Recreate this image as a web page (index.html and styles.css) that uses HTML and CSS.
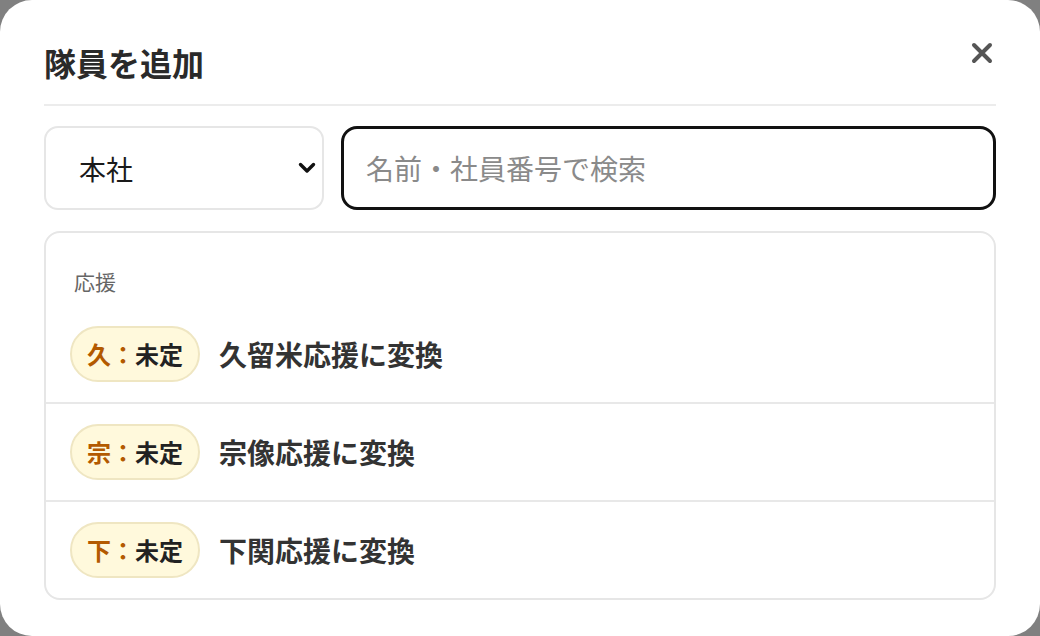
FILE: index.html
```html
<!DOCTYPE html>
<html lang="ja">
<head>
<meta charset="utf-8">
<title>隊員を追加</title>
<link rel="stylesheet" href="styles.css">
</head>
<body>
<div class="modal">
  <div class="header">
    <h1 class="title">隊員を追加</h1>
    <button class="close" aria-label="閉じる">
      <svg width="22" height="22" viewBox="0 0 22 22"><path d="M3 3 L19 19 M19 3 L3 19" stroke="#555" stroke-width="4" stroke-linecap="round"/></svg>
    </button>
  </div>
  <div class="toolbar">
    <div class="select-wrap">
      <select class="select"><option>本社</option></select>
      <svg class="chev" width="18" height="12" viewBox="0 0 18 12"><path d="M2.5 2.5 L9 9 L15.5 2.5" fill="none" stroke="#111" stroke-width="3.4" stroke-linecap="round" stroke-linejoin="round"/></svg>
    </div>
    <input class="search" type="text" placeholder="名前・社員番号で検索">
  </div>
  <div class="list">
    <div class="group-label">応援</div>
    <div class="row">
      <span class="badge"><span class="b-key">久：</span><span class="b-val">未定</span></span>
      <span class="row-text">久留米応援に変換</span>
    </div>
    <div class="row">
      <span class="badge"><span class="b-key">宗：</span><span class="b-val">未定</span></span>
      <span class="row-text">宗像応援に変換</span>
    </div>
    <div class="row">
      <span class="badge"><span class="b-key">下：</span><span class="b-val">未定</span></span>
      <span class="row-text">下関応援に変換</span>
    </div>
  </div>
</div>
</body>
</html>
```

FILE: styles.css
```css
* { box-sizing: border-box; }
html, body { margin: 0; padding: 0; }
body {
  background: #808080;
  font-family: "Noto Sans CJK JP", "Noto Sans", sans-serif;
  width: 1040px;
  height: 636px;
  overflow: hidden;
}
.modal {
  width: 1040px;
  height: 636px;
  background: #fff;
  border-radius: 32px;
  padding: 0 44px;
}
.header {
  display: flex;
  align-items: center;
  justify-content: space-between;
  padding-top: 40px;
  padding-bottom: 20px;
  border-bottom: 2px solid #ececec;
}
.title {
  margin: 0;
  font-size: 32px;
  line-height: 44px;
  font-weight: 700;
  color: #2a2a2a;
}
.close {
  border: 0;
  background: none;
  padding: 0;
  margin-right: 3px;
  margin-top: -18px;
  width: 22px;
  height: 22px;
  display: flex;
}
.toolbar {
  display: flex;
  gap: 17px;
  margin-top: 20px;
  height: 84px;
}
.select-wrap {
  position: relative;
  width: 280px;
  flex: none;
}
.select {
  appearance: none;
  -webkit-appearance: none;
  width: 100%;
  height: 84px;
  border: 2px solid #e6e6e6;
  border-radius: 14px;
  background: #fff;
  padding: 0 0 0 33px;
  font-family: inherit;
  font-size: 27px;
  color: #1a1a1a;
}
.chev {
  position: absolute;
  right: 8px;
  top: 36px;
}
.search {
  flex: 1;
  height: 84px;
  border: 3px solid #111;
  border-radius: 16px;
  padding: 0 0 0 22px;
  font-family: inherit;
  font-size: 28px;
  color: #222;
  outline: none;
}
.search::placeholder { color: #8a8a8a; }
.list {
  margin-top: 21px;
  border: 2px solid #e6e6e6;
  border-radius: 16px;
}
.group-label {
  padding: 36px 0 0 28px;
  line-height: 24px;
  height: 73px;
  font-size: 21px;
  color: #666;
}
.row {
  display: flex;
  align-items: center;
  height: 96px;
  padding-left: 24px;
  gap: 19px;
}
.row + .row {
  border-top: 2px solid #e8e8e8;
  height: 98px;
}
.badge {
  display: inline-flex;
  align-items: center;
  height: 56px;
  padding: 0 15px;
  border-radius: 28px;
  background: #fff9dc;
  border: 2px solid #efe6c2;
  font-size: 24px;
  font-weight: 700;
  line-height: 1;
}
.b-key { color: #b35a00; }
.b-val { color: #222; }
.row-text {
  font-size: 28px;
  font-weight: 700;
  color: #333;
}
```
